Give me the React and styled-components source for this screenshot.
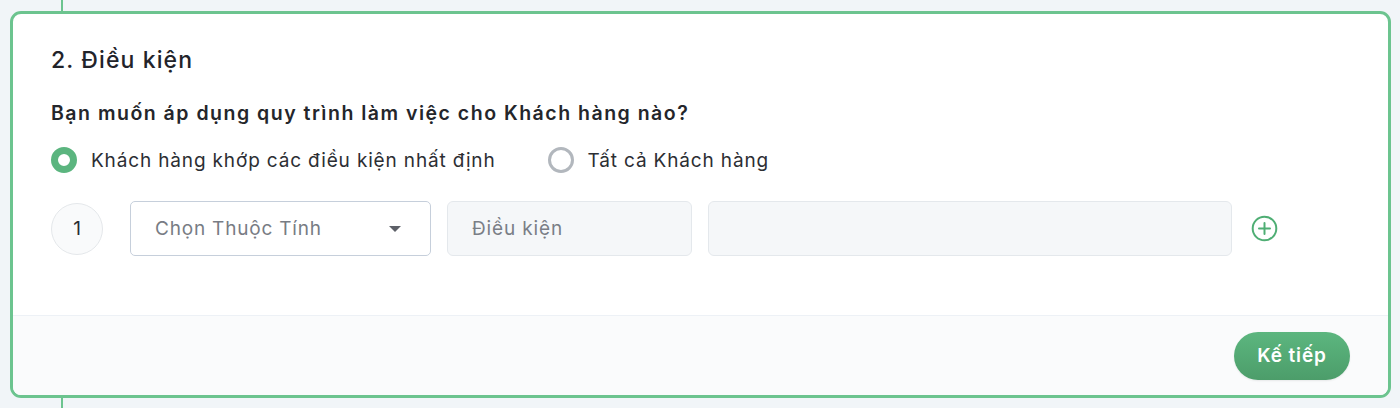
import React, { useState } from 'react';
import styled, { createGlobalStyle } from 'styled-components';

const Global = createGlobalStyle`
    html, body {
        margin: 0;
        padding: 0;
        background: #f1f5f8;
        font-family: Inter, "Noto Sans", sans-serif;
        color: #24262b;
    }
    * { box-sizing: border-box; }
`;

const Page = styled.div`
    position: relative;
    height: 408px;
    padding: 11px 9px 10px 10px;

    &::before {
        content: '';
        position: absolute;
        left: 61px;
        top: 0;
        bottom: 0;
        width: 2px;
        background: #6cc48f;
    }
`;

const Card = styled.div`
    position: relative;
    height: 387px;
    border: 3px solid #6cc48f;
    border-radius: 11px;
    background: #fff;
    display: flex;
    flex-direction: column;
    overflow: hidden;
`;

const Body = styled.div`
    flex: 1;
    padding: 31px 38px 0 38px;
    border-bottom: 1px solid #edf1f6;
`;

const Title = styled.h2`
    margin: 0;
    font-size: 23px;
    letter-spacing: 1.1px;
    line-height: 30px;
    font-weight: 500;
    color: #22232a;
`;

const Question = styled.div`
    margin-top: 23px;
    font-size: 19.5px;
    letter-spacing: 1.5px;
    line-height: 30px;
    font-weight: 600;
`;

const RadioRow = styled.div`
    display: flex;
    align-items: center;
    margin-top: 17px;
    height: 30px;
`;

const RadioOption = styled.label`
    display: flex;
    align-items: center;
    gap: 14px;
    margin-right: 52px;
    font-size: 19px;
    letter-spacing: 0.85px;
    color: #2c2e33;
    cursor: pointer;
`;

const RadioDot = styled.span`
    width: 26px;
    height: 26px;
    border-radius: 50%;
    border: ${p => (p.$checked ? '7px solid #5bb57f' : '3px solid #b2b7bd')};
    background: #fff;
    flex: none;
`;

const ConditionRow = styled.div`
    display: flex;
    align-items: center;
    margin-top: 26px;
    height: 55px;
`;

const Index = styled.div`
    width: 52px;
    height: 52px;
    border-radius: 50%;
    border: 1px solid #e4e7ea;
    background: #f9fafb;
    display: flex;
    align-items: center;
    justify-content: center;
    font-size: 19px;
    color: #2a2c31;
    margin-right: 27px;
    flex: none;
`;

const Select = styled.div`
    width: 301px;
    height: 55px;
    border: 1px solid #c6cfdb;
    border-radius: 5px;
    background: #fff;
    display: flex;
    align-items: center;
    justify-content: space-between;
    padding: 0 29px 0 24px;
    font-size: 19px;
    letter-spacing: 0.8px;
    color: #787c84;
    margin-right: 16px;
    flex: none;
`;

const Caret = styled.span`
    width: 0;
    height: 0;
    border-left: 6px solid transparent;
    border-right: 6px solid transparent;
    border-top: 6px solid #5d6068;
`;

const Field = styled.div`
    width: ${p => p.$w}px;
    height: 55px;
    border: 1px solid #e4e8ec;
    border-radius: 6px;
    background: #f5f7f9;
    display: flex;
    align-items: center;
    padding: 0 24px;
    font-size: 19px;
    letter-spacing: 0.85px;
    color: #7a7e86;
    margin-right: ${p => p.$mr || 0}px;
    flex: none;
`;

const AddButton = styled.button`
    border: none;
    background: none;
    padding: 0;
    width: 28px;
    height: 28px;
    display: flex;
    align-items: center;
    justify-content: center;
    cursor: pointer;
`;

const Footer = styled.div`
    height: 79px;
    background: #fafbfc;
    display: flex;
    align-items: center;
    justify-content: flex-end;
    padding: 0 38px 0 0;
`;

const NextButton = styled.button`
    width: 116px;
    height: 48px;
    border: none;
    border-radius: 24px;
    background: linear-gradient(180deg, #5cb67f 0%, #4c9d6a 100%);
    color: #fff;
    font-family: inherit;
    font-size: 19px;
    letter-spacing: 0.9px;
    font-weight: 600;
    cursor: pointer;
    box-shadow: 0 1px 2px rgba(0, 0, 0, 0.08);
`;

function PlusCircle() {
    return (
        <svg width="27" height="27" viewBox="0 0 27 27" fill="none">
            <circle cx="13.5" cy="13.5" r="11.8" stroke="#4fae74" strokeWidth="2" />
            <path d="M13.5 8v11M8 13.5h11" stroke="#4fae74" strokeWidth="2" strokeLinecap="round" />
        </svg>
    );
}

export default function App() {
    const [mode, setMode] = useState('match');

    return (
        <Page>
            <Global />
            <Card>
                <Body>
                    <Title>2. Điều kiện</Title>
                    <Question>Bạn muốn áp dụng quy trình làm việc cho Khách hàng nào?</Question>
                    <RadioRow>
                        <RadioOption onClick={() => setMode('match')}>
                            <RadioDot $checked={mode === 'match'} />
                            Khách hàng khớp các điều kiện nhất định
                        </RadioOption>
                        <RadioOption onClick={() => setMode('all')}>
                            <RadioDot $checked={mode === 'all'} />
                            Tất cả Khách hàng
                        </RadioOption>
                    </RadioRow>
                    <ConditionRow>
                        <Index>1</Index>
                        <Select>
                            Chọn Thuộc Tính
                            <Caret />
                        </Select>
                        <Field $w={245} $mr={16}>Điều kiện</Field>
                        <Field $w={524} $mr={18}></Field>
                        <AddButton aria-label="Thêm điều kiện">
                            <PlusCircle />
                        </AddButton>
                    </ConditionRow>
                </Body>
                <Footer>
                    <NextButton>Kế tiếp</NextButton>
                </Footer>
            </Card>
        </Page>
    );
}
